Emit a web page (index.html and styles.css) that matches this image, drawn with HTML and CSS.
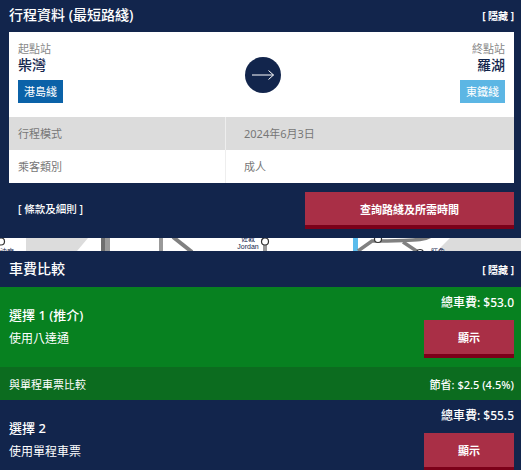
FILE: index.html
```html
<!DOCTYPE html>
<html lang="zh-Hant">
<head>
    <meta charset="UTF-8">
    <meta name="viewport" content="width=device-width, initial-scale=1.0">
    <title>行程資料</title>
    <link rel="stylesheet" href="styles.css">
</head>
<body>
    <section class="panel journey">
        <div class="panel-head">
            <h2>行程資料 (最短路綫)</h2>
            <a class="toggle">[ 隱藏 ]</a>
        </div>
        <div class="card">
            <div class="stations">
                <div class="station">
                    <div class="station-label">起點站</div>
                    <div class="station-name">柴灣</div>
                    <span class="line-tag island">港島綫</span>
                </div>
                <div class="arrow-circle">
                    <svg width="24" height="12" viewBox="0 0 24 12"><path d="M1 6H22.5M17.5 1.5L22.5 6L17.5 10.5" fill="none" stroke="#fff" stroke-width="1"/></svg>
                </div>
                <div class="station end">
                    <div class="station-label">終點站</div>
                    <div class="station-name">羅湖</div>
                    <span class="line-tag east">東鐵綫</span>
                </div>
            </div>
            <div class="info-row grey">
                <div class="info-key">行程模式</div>
                <div class="info-val">2024年6月3日</div>
            </div>
            <div class="info-row">
                <div class="info-key">乘客類別</div>
                <div class="info-val">成人</div>
            </div>
        </div>
        <div class="actions">
            <a class="terms">[ 條款及細則 ]</a>
            <button class="btn btn-search">查詢路綫及所需時間</button>
        </div>
    </section>

    <!-- slice of the route map showing between the two panels -->
    <div class="map-strip">
        <svg width="521" height="13" viewBox="0 0 521 13">
            <path d="M26 0H88L77 13H26Z" fill="#dcdcdc"/>
            <path d="M437 13L450 0H521V13Z" fill="#dcdcdc"/>
            <path d="M101 0H105V13H101Z" fill="#6e6e6e"/>
            <path d="M105 0H110V13H105Z" fill="#999"/>
            <path d="M159 0H163V13H159Z" fill="#999"/>
            <path d="M173 -1L192 14" stroke="#808080" stroke-width="4" fill="none"/>
            <path d="M265 5V13" stroke="#999" stroke-width="4"/>
            <circle cx="265" cy="3.5" r="3.5" fill="#fff" stroke="#333" stroke-width="1.2"/>
            <path d="M353 0H358V13H353Z" fill="#5bbcec"/>
            <path d="M358 13L372 3H380C398 3 410 2 420 1.5C425 1 428 0 431 -2" stroke="#808080" stroke-width="3.5" fill="none"/>
            <path d="M403 4L418 14" stroke="#808080" stroke-width="3.5" fill="none"/>
            <circle cx="378" cy="1" r="3.5" fill="#fff" stroke="#333" stroke-width="1.2"/>
            <circle cx="420" cy="15" r="3.5" fill="#fff" stroke="#333" stroke-width="1.2"/>
            <circle cx="1" cy="3.5" r="3.5" fill="#fff" stroke="#333" stroke-width="1.2"/>
            <text x="248" y="3" class="map-text">佐敦</text>
            <text x="248" y="11" class="map-text">Jordan</text>
            <text x="438" y="16" class="map-text">旺角</text>
            <text x="7" y="16" class="map-text">油麻</text>
        </svg>
    </div>

    <section class="panel fares">
        <div class="panel-head fares-head">
            <h2>車費比較</h2>
            <a class="toggle">[ 隱藏 ]</a>
        </div>
        <div class="option best">
            <div class="option-text">
                <div class="option-title">選擇 1 (推介)</div>
                <div class="option-sub">使用八達通</div>
            </div>
            <div class="option-side">
                <div class="option-total">總車費: $53.0</div>
                <button class="btn btn-show">顯示</button>
            </div>
        </div>
        <div class="compare">
            <span>與單程車票比較</span>
            <span class="saving">節省: $2.5 (4.5%)</span>
        </div>
        <div class="option">
            <div class="option-text">
                <div class="option-title">選擇 2</div>
                <div class="option-sub">使用單程車票</div>
            </div>
            <div class="option-side">
                <div class="option-total">總車費: $55.5</div>
                <button class="btn btn-show">顯示</button>
            </div>
        </div>
    </section>
</body>
</html>
```

FILE: styles.css
```css
* {
    margin: 0;
    padding: 0;
    box-sizing: border-box;
}

html, body {
    height: 470px;
    overflow: hidden;
}

body {
    font-family: "Noto Sans", "Noto Sans CJK TC", sans-serif;
    background-color: #fff;
}

.panel {
    background-color: #12254c;
    color: #fff;
}

.journey {
    height: 238px;
    padding: 0 7px 0 9px;
}

.panel-head {
    height: 32px;
    padding-bottom: 2px;
    display: flex;
    align-items: center;
    justify-content: space-between;
}

.panel-head h2 {
    font-size: 14px;
    line-height: 28px;
    font-weight: 500;
}

.toggle {
    font-size: 10px;
    font-weight: 700;
}

.card {
    background-color: #fff;
    color: #666;
}

.stations {
    height: 85px;
    padding: 10px 9px 0;
    display: flex;
    justify-content: space-between;
}

.station-label {
    font-size: 11px;
    line-height: 14px;
    color: #888;
}

.station-name {
    font-size: 14px;
    line-height: 17px;
    font-weight: 500;
    color: #12254c;
    margin-bottom: 6px;
}

.station.end {
    text-align: right;
}

.line-tag {
    display: inline-block;
    width: 45px;
    height: 23px;
    line-height: 23px;
    text-align: center;
    font-size: 11px;
    color: #fff;
}

.island { background-color: #0b62a8; }
.east { background-color: #5cb6e4; }

.arrow-circle {
    width: 36px;
    height: 36px;
    margin-top: 15px;
    margin-left: 2px;
    border-radius: 50%;
    background-color: #12254c;
    display: flex;
    align-items: center;
    justify-content: center;
}

.info-row {
    height: 33px;
    display: flex;
    font-size: 11px;
    line-height: 33px;
    color: #777;
}

.info-row.grey {
    background-color: #dcdcdc;
}

.info-key {
    width: 217px;
    padding-left: 9px;
    border-right: 1px solid #eee;
}

.info-val {
    padding-left: 18px;
}

.actions {
    display: flex;
    justify-content: space-between;
    margin-top: 9px;
}

.terms {
    margin-left: 9px;
    font-size: 10.5px;
    font-weight: 500;
    line-height: 34px;
}

.btn {
    border: 0;
    border-bottom: 4px solid #7c0019;
    background-color: #a92f46;
    color: #fff;
    font-family: inherit;
    font-weight: 700;
    font-size: 11px;
}

.btn-search {
    width: 209px;
    height: 37px;
}

.map-strip {
    height: 13px;
    overflow: hidden;
    background-color: #fff;
}

.map-strip svg {
    display: block;
}

.map-text {
    font-family: "Liberation Sans", "Noto Sans CJK TC", sans-serif;
    font-size: 7px;
    fill: #12254c;
    text-anchor: middle;
}

.fares-head {
    height: 36px;
    padding: 0 7px 0 9px;
}

.option {
    height: 70px;
    padding: 0 7px 0 9px;
    display: flex;
    justify-content: space-between;
}

.option.best {
    height: 80px;
    background-color: #078120;
}

.option-text {
    padding-top: 18px;
}

.option-title {
    font-size: 13px;
    line-height: 20px;
    font-weight: 500;
}

.option-sub {
    font-size: 12px;
    line-height: 18px;
    margin-top: 5px;
}

.option-side {
    text-align: right;
}

.option-total {
    font-size: 12px;
    font-weight: 500;
    line-height: 16px;
    margin: 8px 0 9px;
}

.btn-show {
    display: block;
    width: 90px;
    height: 38px;
}

.compare {
    height: 33px;
    padding: 0 7px 0 9px;
    display: flex;
    align-items: center;
    justify-content: space-between;
    background-color: #0c6c1f;
    font-size: 11px;
}

.saving {
    font-weight: 500;
}
```
